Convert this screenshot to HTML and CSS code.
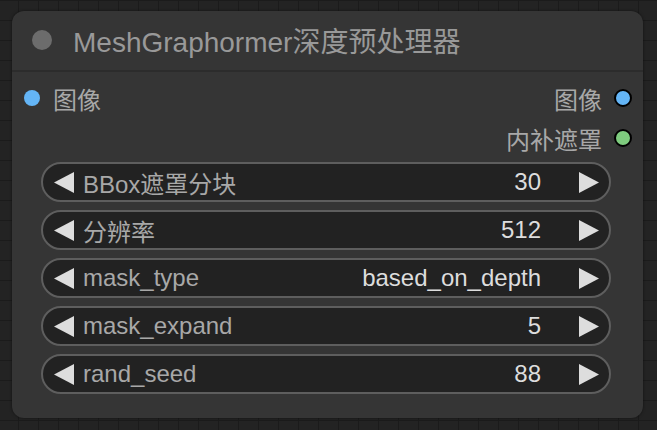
FILE: index.html
```html
<!DOCTYPE html>
<html>
<head>
<meta charset="utf-8">
<link rel="stylesheet" href="styles.css">
</head>
<body>
<div class="node">
  <div class="title">
    <span class="title-dot"></span>
    <span class="title-text">MeshGraphormer深度预处理器</span>
  </div>
  <div class="slots">
    <div class="slot-row">
      <div class="slot-in"><span class="dot dot-in"></span><span class="slot-label">图像</span></div>
      <div class="slot-out"><span class="slot-label">图像</span><span class="dot dot-out blue"></span></div>
    </div>
    <div class="slot-row">
      <div class="slot-in"></div>
      <div class="slot-out"><span class="slot-label">内补遮罩</span><span class="dot dot-out green"></span></div>
    </div>
  </div>
  <div class="widgets">
    <div class="widget">
      <svg class="arrow" width="20" height="21" viewBox="0 0 20 21"><polygon points="20,0 20,21 0,10.5"/></svg>
      <span class="w-label">BBox遮罩分块</span>
      <span class="w-value">30</span>
      <svg class="arrow arrow-r" width="20" height="21" viewBox="0 0 20 21"><polygon points="0,0 0,21 20,10.5"/></svg>
    </div>
    <div class="widget">
      <svg class="arrow" width="20" height="21" viewBox="0 0 20 21"><polygon points="20,0 20,21 0,10.5"/></svg>
      <span class="w-label">分辨率</span>
      <span class="w-value">512</span>
      <svg class="arrow arrow-r" width="20" height="21" viewBox="0 0 20 21"><polygon points="0,0 0,21 20,10.5"/></svg>
    </div>
    <div class="widget">
      <svg class="arrow" width="20" height="21" viewBox="0 0 20 21"><polygon points="20,0 20,21 0,10.5"/></svg>
      <span class="w-label">mask_type</span>
      <span class="w-value">based_on_depth</span>
      <svg class="arrow arrow-r" width="20" height="21" viewBox="0 0 20 21"><polygon points="0,0 0,21 20,10.5"/></svg>
    </div>
    <div class="widget">
      <svg class="arrow" width="20" height="21" viewBox="0 0 20 21"><polygon points="20,0 20,21 0,10.5"/></svg>
      <span class="w-label">mask_expand</span>
      <span class="w-value">5</span>
      <svg class="arrow arrow-r" width="20" height="21" viewBox="0 0 20 21"><polygon points="0,0 0,21 20,10.5"/></svg>
    </div>
    <div class="widget">
      <svg class="arrow" width="20" height="21" viewBox="0 0 20 21"><polygon points="20,0 20,21 0,10.5"/></svg>
      <span class="w-label">rand_seed</span>
      <span class="w-value">88</span>
      <svg class="arrow arrow-r" width="20" height="21" viewBox="0 0 20 21"><polygon points="0,0 0,21 20,10.5"/></svg>
    </div>
  </div>
</div>
</body>
</html>
```
FILE: styles.css
```css
html, body {
  margin: 0;
  height: 100%;
}
body {
  background-color: #232323;
  background-image:
    linear-gradient(to right, #1b1b1b 1px, transparent 1px),
    linear-gradient(to bottom, #1b1b1b 1px, transparent 1px);
  background-size: 20px 20px;
  background-position: 18px 0;
  padding: 11px 0 0 12px;
  box-sizing: border-box;
  font-family: "Liberation Sans", "Noto Sans CJK SC", Arial, sans-serif;
  overflow: hidden;
}
.node {
  width: 631px;
  height: 407px;
  background: #353535;
  border-radius: 12px;
  box-shadow: 0 0 3px rgba(0,0,0,0.5);
  box-sizing: border-box;
}
.title {
  height: 61px;
  box-sizing: border-box;
  border-bottom: 2px solid #2c2c2c;
  display: flex;
  align-items: center;
  padding-left: 20px;
  padding-bottom: 1px;
}
.title-dot {
  width: 20px;
  height: 20px;
  border-radius: 50%;
  background: #6c6c6c;
  flex: none;
}
.title-text {
  margin-left: 21px;
  font-size: 28px;
  color: #999999;
  white-space: nowrap;
}
.slots {
  padding: 6px 11px 0 12px;
}
.slot-row {
  height: 40px;
  display: flex;
  justify-content: space-between;
  align-items: center;
}
.slot-in, .slot-out {
  display: flex;
  align-items: center;
}
.slot-label {
  font-size: 24px;
  color: #a8a8a8;
}
.dot {
  border-radius: 50%;
  flex: none;
}
.dot-in {
  width: 16px;
  height: 16px;
  background: #64b5f6;
  margin-right: 13px;
}
.dot-out {
  width: 14px;
  height: 14px;
  border: 2px solid #000;
  margin-left: 12px;
}
.blue { background: #64b5f6; }
.green { background: #7ecb7e; }
.widgets {
  margin-top: 4px;
  padding: 0 32px 0 29px;
  display: flex;
  flex-direction: column;
  gap: 8px;
}
.widget {
  height: 40px;
  box-sizing: border-box;
  border: 2px solid #5e5e5e;
  border-radius: 20px;
  background: #222222;
  display: flex;
  align-items: center;
  padding: 0 10px 0 11px;
  font-size: 24px;
}
.arrow {
  fill: #dddddd;
  flex: none;
}
.w-label {
  margin-left: 9px;
  color: #a8a8a8;
  white-space: nowrap;
}
.w-value {
  margin-left: auto;
  color: #dddddd;
  white-space: nowrap;
}
.arrow-r {
  margin-left: 38px;
}
```
